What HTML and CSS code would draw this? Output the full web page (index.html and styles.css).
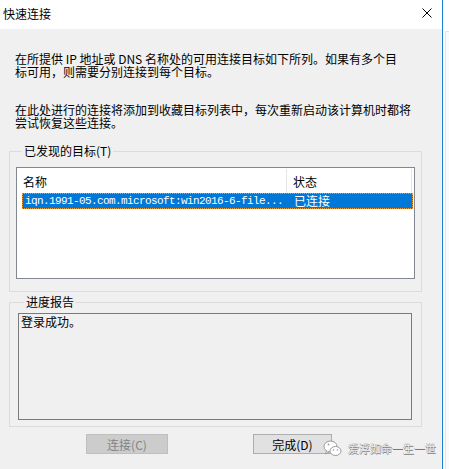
FILE: index.html
```html
<!DOCTYPE html>
<html lang="zh-CN">
<head>
<meta charset="utf-8">
<title>快速连接</title>
<link rel="stylesheet" href="styles.css">
</head>
<body>
<div class="screen">
  <div class="win">
    <div class="titlebar">
      <span class="title">快速连接</span>
      <svg class="close" width="10" height="10" viewBox="0 0 10 10"><path d="M0.5 0.5 L9.5 9.5 M9.5 0.5 L0.5 9.5" stroke="#000" stroke-width="1" fill="none"/></svg>
    </div>
    <div class="content">
      <div class="desc"><div class="ln">在所提供 IP 地址或 DNS 名称处的可用连接目标如下所列。如果有多个目</div><div class="ln">标可用，则需要分别连接到每个目标。</div></div>
      <div class="desc desc2"><div class="ln">在此处进行的连接将添加到收藏目标列表中，每次重新启动该计算机时都将</div><div class="ln">尝试恢复这些连接。</div></div>
      <fieldset class="group g1">
        <legend>已发现的目标(T)</legend>
        <div class="list">
          <div class="lhead">
            <div class="hc1">名称</div>
            <div class="hc2">状态</div>
          </div>
          <div class="lrow">
            <div class="rc1">iqn.1991-05.com.microsoft:win2016-6-file...</div>
            <div class="rc2">已连接</div>
          </div>
        </div>
      </fieldset>
      <fieldset class="group g2">
        <legend>进度报告</legend>
        <div class="log">登录成功。</div>
      </fieldset>
      <div class="buttons">
        <div class="btn disabled">连接(C)</div>
        <div class="btn done">完成(D)</div>
      </div>
    </div>
  </div>
  <div class="edge"></div>
  <div class="behind"><div class="behind-win"></div></div>
  <div class="watermark">
    <svg width="19" height="17" viewBox="0 0 19 17">
      <ellipse cx="7.5" cy="6.5" rx="6.5" ry="5.5" fill="#fff" stroke="#9a9a9a" stroke-width="1"/>
      <path d="M3.5 11 L2.5 14 L6 12" fill="#fff" stroke="#9a9a9a" stroke-width="1"/>
      <ellipse cx="12.5" cy="11" rx="5.5" ry="4.5" fill="#fff" stroke="#9a9a9a" stroke-width="1"/>
      <circle cx="5.5" cy="4.5" r="0.9" fill="#9a9a9a"/>
      <circle cx="10.5" cy="10" r="0.8" fill="#9a9a9a"/>
      <circle cx="14.5" cy="10" r="0.8" fill="#9a9a9a"/>
    </svg>
    <span class="wm-text">爱浮如命一生一世</span>
  </div>
</div>
</body>
</html>
```

FILE: styles.css
```css
* { box-sizing: border-box; }
html, body { margin: 0; padding: 0; }
body {
  font-family: "Noto Sans CJK SC", "Noto Sans", sans-serif;
  font-size: 12px;
  color: #000;
  background: #fff;
}
.screen {
  position: relative;
  display: flex;
  width: 449px;
  height: 469px;
  overflow: hidden;
}
.win {
  width: 442px;
  display: flex;
  flex-direction: column;
  background: #f0f0f0;
}
.titlebar {
  height: 29px;
  background: #fff;
  display: flex;
  align-items: flex-start;
  justify-content: space-between;
  padding: 7px 10px 0 3px;
  flex-shrink: 0;
}
.title {
  font-size: 12px;
  line-height: 14px;
}
.close {
  display: block;
  margin-top: 1px;
}
.content {
  flex: 1;
  padding-top: 23px;
}
.desc {
  padding-left: 15px;
  font-size: 12px;
}
.desc .ln {
  height: 13px;
  line-height: 13px;
  white-space: nowrap;
}
.desc2 {
  margin-top: 25px;
}
.group {
  margin: 0 0 0 9px;
  width: 413px;
  border: 1px solid #dcdcdc;
  min-inline-size: 0;
}
.group legend {
  padding: 0 2px;
  margin-left: 6px;
  line-height: 14px;
  font-size: 12px;
}
.g1 {
  margin-top: 15px;
  padding: 9px 6px 12px 6px;
}
.g2 {
  margin-top: 3px;
  padding: 4px 9px 6px 8px;
}
.list {
  height: 112px;
  border: 1px solid #828790;
  background: #fff;
}
.lhead {
  display: flex;
  height: 25px;
  align-items: stretch;
  width: 395px;
}
.hc1 {
  width: 270px;
  padding-left: 6px;
  border-right: 1px solid #e5e5e5;
  display: flex;
  align-items: center;
  margin-top: 1px;
}
.hc2 {
  flex: 1;
  padding-left: 6px;
  border-right: 1px solid #e5e5e5;
  display: flex;
  align-items: center;
  margin-top: 1px;
}
.lrow {
  display: flex;
  margin-left: 5px;
  width: 391px;
  height: 16px;
  background: #0078d7;
  border: 1px dotted #f09a3c;
  color: #fff;
  align-items: center;
}
.rc1 {
  width: 264px;
  padding-left: 2px;
  font-family: "Liberation Mono", monospace;
  font-size: 11px;
  letter-spacing: -0.6px;
  white-space: nowrap;
  overflow: hidden;
}
.rc2 {
  padding-left: 7px;
  font-size: 12px;
  line-height: 14px;
}
.log {
  height: 107px;
  border: 1px solid #7a7a7a;
  background: #f0f0f0;
  padding: 2px 2px;
  line-height: 12px;
}
.buttons {
  display: flex;
  margin-top: 7px;
  padding-left: 86px;
  gap: 85px;
}
.btn {
  height: 20px;
  display: flex;
  align-items: center;
  justify-content: center;
  font-size: 12px;
}
.btn.disabled {
  width: 82px;
  background: #cccccc;
  border: 1px solid #bfbfbf;
  color: #838383;
}
.btn.done {
  width: 79px;
  background: #e1e1e1;
  border: 1px solid #adadad;
  color: #000;
}
.edge {
  width: 1px;
  background: #1883d7;
}
.behind {
  flex: 1;
  background: #fff;
  padding-top: 31px;
}
.behind-win {
  height: 100%;
  border-top: 1px solid #e3e3e3;
  border-left: 1px solid #e3e3e3;
  margin-left: 2px;
  background: #fafafa;
}
.watermark {
  position: absolute;
  left: 323px;
  top: 440px;
  display: flex;
  align-items: center;
  gap: 6px;
}
.watermark svg { display: block; }
.wm-text {
  font-size: 11px;
  line-height: 13px;
  color: #ececec;
  text-shadow: 0.6px 0.6px 0 #7a7a7a, -0.4px -0.4px 0 #9a9a9a;
}
```
